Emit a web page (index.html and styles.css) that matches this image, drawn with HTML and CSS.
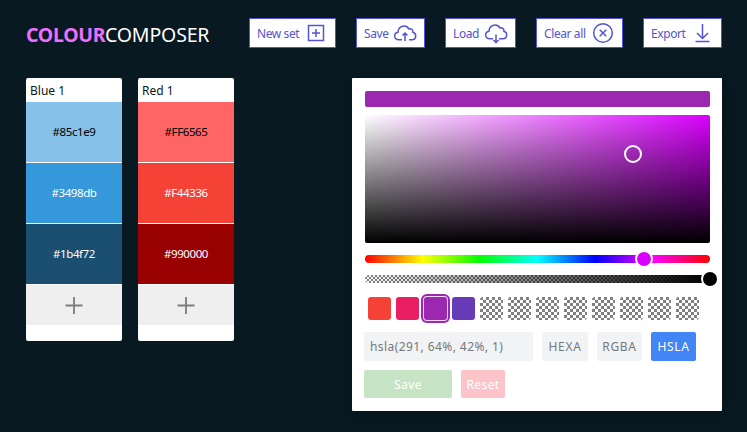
FILE: index.html
```html
<!DOCTYPE html>
<html lang="en">
<head>
<meta charset="utf-8">
<title>Colour Composer</title>
<link rel="stylesheet" href="styles.css">
</head>
<body>
<header class="header">
  <h1 class="logo"><strong>COLOUR</strong><span>COMPOSER</span></h1>
  <nav class="toolbar">
    <button class="tool new"><span>New set</span><svg viewBox="0 0 24 24"><path d="M4.500 4.500h15v15h-15zM12 8v8M8 12h8"/></svg></button>
    <button class="tool save"><span>Save</span><svg viewBox="0 0 24 24"><path d="M9 18.700H5.800C.5 18.600.4 12 5 11.200 5.300 4.800 13 3 16 8c2.600-.6 4.200 1 3.900 3.300C24 12.500 23.500 18.700 19 18.700h-3M12 20v-8M9.500 14.500 12 12l2.500 2.500"/></svg></button>
    <button class="tool load"><span>Load</span><svg viewBox="0 0 24 24"><path d="M9 17.700H5.800C.5 17.600.4 11 5 10.200 5.300 3.800 13 2 16 7c2.600-.6 4.200 1 3.900 3.300C24 11.500 23.500 17.700 19 17.700h-4M12 13.500v8M9.500 19 12 21.500l2.500-2.500"/></svg></button>
    <button class="tool clear"><span>Clear all</span><svg viewBox="0 0 24 24"><circle cx="12" cy="12" r="9.300"/><path d="m8.700 8.700 6.600 6.600M15.300 8.700l-6.600 6.600"/></svg></button>
    <button class="tool export"><span>Export</span><svg viewBox="0 0 24 24"><path d="M12.500 3v14.500M7 12l5.500 5.500L18 12M5.500 20.500h14"/></svg></button>
  </nav>
</header>
<main class="main">
  <section class="sets">
    <article class="set">
      <h2>Blue 1</h2>
      <div class="colour sky">#85c1e9</div>
      <div class="colour blue">#3498db</div>
      <div class="colour navy">#1b4f72</div>
      <button class="add" aria-label="Add"><svg viewBox="0 0 18 18"><path d="M9 1v17M.5 9.500h17"/></svg></button>
    </article>
    <article class="set">
      <h2>Red 1</h2>
      <div class="colour coral">#FF6565</div>
      <div class="colour red">#F44336</div>
      <div class="colour maroon">#990000</div>
      <button class="add" aria-label="Add"><svg viewBox="0 0 18 18"><path d="M9 1v17M.5 9.500h17"/></svg></button>
    </article>
  </section>
  <section class="picker">
    <div class="preview"></div>
    <div class="palette"><i class="cursor"></i></div>
    <div class="slider hue"><i class="knob"></i></div>
    <div class="slider alpha"><i class="knob"></i></div>
    <div class="swatches">
      <i class="s1"></i><i class="s2"></i><i class="s3"></i><i class="s4"></i><i></i><i></i><i></i><i></i><i></i><i></i><i></i><i></i>
    </div>
    <div class="row formats">
      <div class="value">hsla(291, 64%, 42%, 1)</div>
      <button class="hexa">HEXA</button><button class="rgba">RGBA</button><button class="hsla">HSLA</button>
    </div>
    <div class="row actions"><button class="commit">Save</button><button class="reset">Reset</button></div>
  </section>
</main>
</body>
</html>
```
FILE: styles.css
```css
* { box-sizing: border-box; }
body {
  margin: 0;
  width: 747px;
  height: 432px;
  overflow: hidden;
  background: #081921;
  font-family: "Noto Sans", "Open Sans", sans-serif;
}
button { margin: 0; padding: 0; border: 0; font: inherit; }
svg { display: block; fill: none; }

.header {
  display: flex;
  justify-content: space-between;
  height: 78px;
  padding: 18px 25px 0 26px;
}
.logo {
  display: flex;
  margin: 0;
  font-size: 19.5px;
  line-height: 34px;
  font-weight: 400;
  color: #fff;
  white-space: nowrap;
}
.logo strong { width: 79px; color: #ec70ff; font-weight: 700; letter-spacing: -0.3px; }
.logo span { letter-spacing: -0.15px; }
.toolbar { display: flex; gap: 20px; }
.tool {
  display: flex;
  align-items: center;
  justify-content: space-between;
  height: 30px;
  padding: 0 7px;
  border: 1px solid #5452dc;
  background: #fff;
  color: #5553d2;
  font-size: 12px;
  letter-spacing: -0.4px;
  white-space: nowrap;
}
.tool svg { width: 24px; height: 24px; stroke: #5553d2; stroke-width: 1.5; }
.tool span { width: 0; }
.new { width: 87px; }
.save { width: 69px; }
.load { width: 71px; }
.clear { width: 87px; }
.export { width: 79px; }

.main {
  display: flex;
  justify-content: space-between;
  align-items: flex-start;
  padding: 0 25px 0 26px;
}
.sets { display: flex; gap: 16px; }
.set {
  width: 96px;
  height: 263px;
  overflow: hidden;
  border-radius: 2px;
  background: #fff;
}
.set h2 {
  height: 24px;
  margin: 0;
  padding-left: 4px;
  color: #081921;
  font-size: 12px;
  line-height: 25px;
  font-weight: 400;
  letter-spacing: 0;
}
.colour {
  height: 60px;
  margin-bottom: 1px;
  color: #fff;
  font-size: 11.5px;
  line-height: 60px;
  letter-spacing: -0.4px;
  text-align: center;
}
.sky { background: #85c1e9; color: #000; }
.blue { background: #3498db; }
.navy { background: #1b4f72; }
.coral { background: #ff6565; color: #000; }
.red { background: #f44336; }
.maroon { background: #900; }
.add {
  display: flex;
  align-items: center;
  justify-content: center;
  width: 96px;
  height: 40px;
  background: #efefef;
}
.add svg { width: 18px; height: 18px; stroke: #7c7c7c; stroke-width: 1.8; }

.picker {
  width: 370px;
  height: 333px;
  padding: 13px 12px 0 13px;
  border-radius: 1px;
  background: #fff;
  box-shadow: 0 4px 20px rgba(0, 0, 0, 0.2);
}
.preview { height: 16px; border-radius: 2px; background: #9c27b0; }
.palette {
  position: relative;
  height: 128px;
  margin-top: 8px;
  border-radius: 2px;
  background: linear-gradient(to top, #000, transparent), linear-gradient(to left, #d900ff, #fff);
}
.cursor {
  position: absolute;
  left: 259px;
  top: 30px;
  width: 18px;
  height: 18px;
  border: 2px solid #fff;
  border-radius: 50%;
}
.slider { position: relative; height: 8px; border-radius: 4px; }
.hue {
  margin-top: 12px;
  background: linear-gradient(to right, red, #ff0, lime, cyan, blue, magenta, red);
}
.alpha {
  margin-top: 12px;
  background: linear-gradient(to right, transparent, #000), repeating-conic-gradient(#808080 0 25%, #fff 0 50%) 0 0 / 4px 4px;
}
.knob {
  position: absolute;
  top: -5px;
  width: 18px;
  height: 18px;
  border: 2px solid #fff;
  border-radius: 50%;
}
.hue .knob { left: 270px; background: #d900ff; }
.alpha .knob { left: 336px; background: #000; }
.swatches { display: flex; gap: 5px; margin: 14px 0 0 3px; }
.swatches i {
  width: 23px;
  height: 23px;
  border-radius: 3px;
  background: repeating-conic-gradient(#fff 0 25%, #808080 0 50%) 0 0 / 6px 6px;
}
.swatches .s1 { background: #f44336; }
.swatches .s2 { background: #e91e63; }
.swatches .s3 { background: #9c27b0; box-shadow: 0 0 0 1px #eed8f2, 0 0 0 3px #9c27b0; }
.swatches .s4 { background: #673ab7; }

.row { display: flex; gap: 9px; margin-left: -1px; font-size: 12px; }
.formats { margin-top: 12px; color: #75797c; }
.formats > * { height: 29px; border-radius: 2px; background: #f1f3f4; line-height: 29px; }
.value { width: 169px; padding-left: 6px; letter-spacing: 0.42px; white-space: nowrap; }
.row button { color: #75797c; letter-spacing: 0.7px; text-align: center; }
.hexa { width: 46px; }
.rgba { width: 45px; }
.row .hsla { width: 45px; background: #4285f4; color: #fff; }
.actions { margin-top: 9px; }
.actions button { height: 28px; border-radius: 2px; color: #fff; line-height: 29px; }
.actions button { letter-spacing: 0.4px; }
.commit { width: 88px; background: #c6e4c4; }
.reset { width: 44px; background: #fcc3c9; }
```
